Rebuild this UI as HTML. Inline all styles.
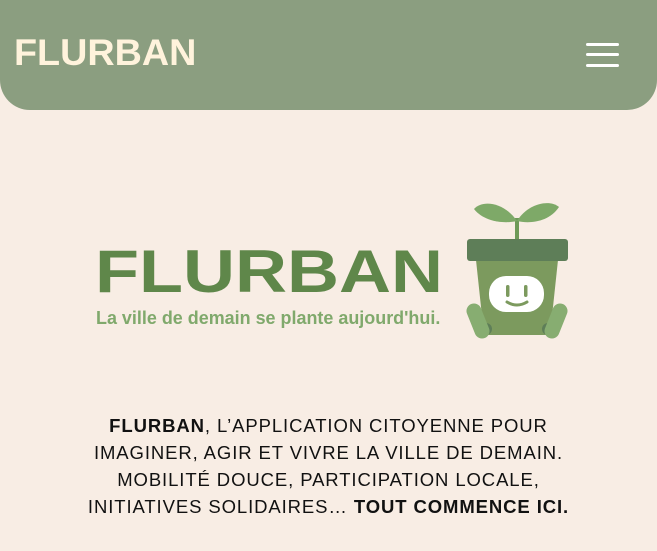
<!DOCTYPE html>
<html><head><meta charset="utf-8">
<style>
*{margin:0;padding:0;box-sizing:border-box}
html,body{width:657px;height:551px;overflow:hidden;background:#f8ede4;font-family:"Liberation Sans",sans-serif}
.hdr{position:absolute;left:0;top:0;width:657px;height:110px;background:#8b9e80;border-radius:0 0 30px 30px}
.hlogo{position:absolute;left:14px;top:33px;font-size:37px;font-weight:bold;color:#fff3dc;transform:scaleX(1.02);transform-origin:left top;line-height:40px}
.ham{position:absolute;left:586px;width:33px;height:3px;background:#fff;border-radius:2px}
.big{position:absolute;left:95px;top:242px;font-size:60px;font-weight:bold;color:#5f874a;line-height:1;transform:scaleX(1.2);transform-origin:left top}
.tag{position:absolute;left:96px;top:306px;font-size:18.5px;font-weight:bold;color:#80a96c;line-height:24px;transform:scaleX(.97);transform-origin:left top}
.txt{position:absolute;left:0;top:412px;width:657px;text-align:center;font-size:18.5px;line-height:27px;letter-spacing:.9px;color:#111;white-space:nowrap}
.txt b{font-weight:900}
</style></head><body>
<div class="hdr">
<div class="hlogo">FLURBAN</div>
<div class="ham" style="top:43px"></div>
<div class="ham" style="top:53px"></div>
<div class="ham" style="top:64px"></div>
</div>
<div class="big">FLURBAN</div>
<div class="tag">La ville de demain se plante aujourd'hui.</div>
<svg style="position:absolute;left:0;top:0" width="657" height="551">
<path d="M517 240 L517 218" stroke="#6e9a58" stroke-width="4"/>
<path d="M517 221 C505 203 483 199 474 209 C484 222 505 224 517 221Z" fill="#7ea968"/>
<path d="M517 221 C528 203 550 199 559 207 C549 222 530 224 517 221Z" fill="#7ea968"/>
<path d="M476 260 L558 260 L550 335 L484 335Z" fill="#7c9a5e"/>
<rect x="467" y="239" width="101" height="22" rx="3" fill="#5e7e58"/>
<rect x="489" y="276" width="55" height="36" rx="17" fill="#fff"/>
<rect x="506" y="285" width="3.5" height="12" rx="1.7" fill="#7c9a5e"/>
<rect x="524" y="285" width="3.5" height="12" rx="1.7" fill="#7c9a5e"/>
<path d="M507 302 Q517 308 527 302" stroke="#7c9a5e" stroke-width="3" fill="none" stroke-linecap="round"/>
<circle cx="486" cy="329" r="6" fill="#5e7e58"/>
<circle cx="548" cy="329" r="6" fill="#5e7e58"/>
<path d="M474 311 L482 331" stroke="#87ad71" stroke-width="15" stroke-linecap="round"/>
<path d="M560 311 L552 331" stroke="#87ad71" stroke-width="15" stroke-linecap="round"/>
</svg>
<div class="txt"><b>FLURBAN</b>, L’APPLICATION CITOYENNE POUR<br>IMAGINER, AGIR ET VIVRE LA VILLE DE DEMAIN.<br>MOBILITÉ DOUCE, PARTICIPATION LOCALE,<br>INITIATIVES SOLIDAIRES… <b>TOUT COMMENCE ICI.</b></div>
</body></html>
